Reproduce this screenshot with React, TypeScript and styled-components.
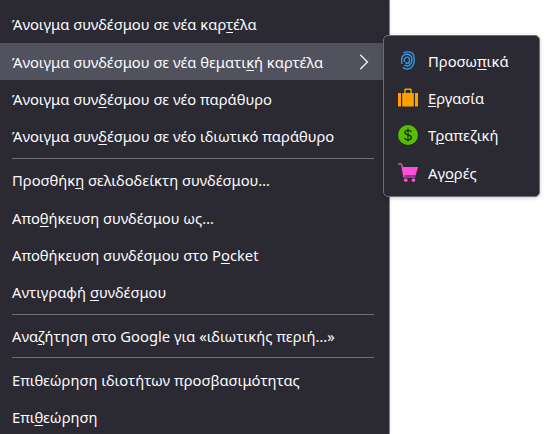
import React from "react";
import styled, { createGlobalStyle } from "styled-components";

const Global = createGlobalStyle`
  html, body { margin: 0; padding: 0; background: #fff; }
  body { width: 555px; height: 434px; overflow: hidden; font-family: "Noto Sans", "Liberation Sans", Arial, sans-serif; }
  u { text-underline-offset: 2px; text-decoration-thickness: 1px; }
`;

const Stage = styled.div`
  position: relative;
  width: 555px;
  height: 434px;
  overflow: hidden;
`;

const MainMenu = styled.div`
  width: 390px;
  height: 434px;
  background: #2b2a33;
  padding-top: 5.8px;
  box-sizing: border-box;
  border-right: 1px solid #85858a;
  box-shadow: 0 0 2px rgba(0, 0, 0, 0.15);
`;

const Row = styled.div<{ $active?: boolean }>`
  height: 37.33px;
  display: flex;
  align-items: center;
  justify-content: space-between;
  padding: 0 20px 0 12px;
  box-sizing: border-box;
  color: #fbfbfe;
  font-size: 14.75px;
  white-space: nowrap;
  background: ${(p) => (p.$active ? "#52525e" : "transparent")};
`;

const Separator = styled.div<{ $compact?: boolean }>`
  height: 1px;
  margin: ${(p) => (p.$compact ? "2px" : "2.67px")} 15px 3px 12px;
  background: #6f6e75;
`;

const SubMenu = styled.div`
  position: absolute;
  left: 382.5px;
  top: 35px;
  width: 157.5px;
  height: 161.5px;
  box-sizing: border-box;
  padding: 5.9px 0;
  background: #2b2a33;
  border: 1px solid #6f6e75;
  border-radius: 5px;
  box-shadow: 0 1px 4px rgba(0, 0, 0, 0.2);
`;

const SubRow = styled.div`
  height: 37.33px;
  display: flex;
  align-items: center;
  color: #fbfbfe;
  font-size: 14.75px;
  padding-left: 14.5px;
  gap: 10px;
`;

const IconSlot = styled.span`
  width: 20px;
  height: 20px;
  display: flex;
  align-items: center;
  justify-content: center;
  flex: none;
`;

const Chevron = () => (
  <svg width="10" height="16" viewBox="0 0 10 16" fill="none">
    <path d="M1.2 0.8 L8.4 8 L1.2 15.2" stroke="#e6e6ea" strokeWidth="1.5" />
  </svg>
);

const Fingerprint = () => (
  <svg width="14" height="19" viewBox="0 0 14 19" fill="none" stroke="#3498e6" strokeWidth="1.4">
    <path d="M2.5 1.8 C5 0.4 9.8 0.5 11.8 2.6 C13.5 4.6 13.4 10 12.8 12.4 C11.8 16 9.2 18 6.2 18 C4.2 18 2.8 17.4 1.8 16.2" />
    <path d="M0.9 12.8 C0.3 9.5 0.5 6 2.2 4.5 C4.5 2.6 8.4 3 9.9 5 C11.4 7.2 11 11.4 9.6 13.2 C8 15.4 5 15.6 3.4 14" />
    <path d="M3.2 10.8 C2.9 8.6 4 6.2 6 6.1 C7.8 6 8.6 7.6 8.5 9.4 C8.4 11.2 7.4 12.6 6 12.6 C5 12.6 4.9 11.6 5.3 10.8" />
  </svg>
);

const Briefcase = () => (
  <svg width="20" height="19" viewBox="0 0 20 19">
    <path d="M6.3 5 V1.6 Q6.3 0.5 7.4 0.5 H12.6 Q13.7 0.5 13.7 1.6 V5 H12.3 V2 H7.7 V5 Z" fill="#ff9f00" />
    <rect x="0" y="5" width="3" height="13.5" fill="#ff9f00" />
    <rect x="4.2" y="5" width="11.6" height="13.5" fill="#ff9f00" />
    <rect x="17" y="5" width="3" height="13.5" fill="#ff9f00" />
  </svg>
);

const Dollar = () => (
  <svg width="20" height="20" viewBox="0 0 20 20">
    <circle cx="10" cy="10" r="10" fill="#57bd00" />
    <path d="M10 3.4 V16.6" stroke="#1d2a16" strokeWidth="1" />
    <path d="M13.3 6.9 C12.8 5.8 11.5 5.3 10 5.3 C8 5.3 6.8 6.2 6.8 7.6 C6.8 11 13.4 9 13.4 12.4 C13.4 13.9 12 14.8 10 14.8 C8.3 14.8 7 14.1 6.5 12.9" stroke="#1d2a16" strokeWidth="1.3" fill="none" />
  </svg>
);

const Cart = () => (
  <svg width="20" height="19" viewBox="0 0 20 19">
    <path d="M0 0.2 H3.6 L4.6 2.6 L6.6 13.4 H17.4 V14.6 H5.4 L3 1.6 H0 Z" fill="#ff4fd8" />
    <path d="M4.4 4 H20 L17.6 12.4 H6 Z" fill="#ff4fd8" />
    <rect x="6" y="15.6" width="3.6" height="3.2" rx="1.3" fill="#ff4fd8" />
    <rect x="13.6" y="15.6" width="3.6" height="3.2" rx="1.3" fill="#ff4fd8" />
  </svg>
);

export default function App() {
  return (
    <>
      <Global />
      <Stage>
        <MainMenu>
          <Row>
            <span>Άνοιγμα συνδέσμου σε νέα καρ<u>τ</u>έλα</span>
          </Row>
          <Row $active>
            <span>Άνοιγμα συνδέσμου σε νέα θεματι<u>κ</u>ή καρτέλα</span>
            <Chevron />
          </Row>
          <Row>
            <span>Άνοιγμα συν<u>δ</u>έσμου σε νέο παράθυρο</span>
          </Row>
          <Row>
            <span>Άνοιγμα συν<u>δ</u>έσμου σε νέο ιδιωτικό παράθυρο</span>
          </Row>
          <Separator />
          <Row>
            <span>Προσθήκ<u>η</u> σελιδοδείκτη συνδέσμου…</span>
          </Row>
          <Row>
            <span>Απο<u>θ</u>ήκευση συνδέσμου ως…</span>
          </Row>
          <Row>
            <span>Αποθήκευση συνδέσμου στο P<u>o</u>cket</span>
          </Row>
          <Row>
            <span>Αντιγραφή <u>σ</u>υνδέσμου</span>
          </Row>
          <Separator />
          <Row>
            <span>Ανα<u>ζ</u>ήτηση στο Google για «ιδιωτικής περιή…»</span>
          </Row>
          <Separator $compact />
          <Row>
            <span>Επιθεώρηση ιδιοτήτων προσβασιμότητας</span>
          </Row>
          <Row>
            <span>Επι<u>θ</u>εώρηση</span>
          </Row>
        </MainMenu>
        <SubMenu>
          <SubRow>
            <IconSlot><Fingerprint /></IconSlot>
            <span>Προσω<u>π</u>ικά</span>
          </SubRow>
          <SubRow>
            <IconSlot><Briefcase /></IconSlot>
            <span><u>Ε</u>ργασία</span>
          </SubRow>
          <SubRow>
            <IconSlot><Dollar /></IconSlot>
            <span>Τ<u>ρ</u>απεζική</span>
          </SubRow>
          <SubRow>
            <IconSlot><Cart /></IconSlot>
            <span>Αγ<u>ο</u>ρές</span>
          </SubRow>
        </SubMenu>
      </Stage>
    </>
  );
}
